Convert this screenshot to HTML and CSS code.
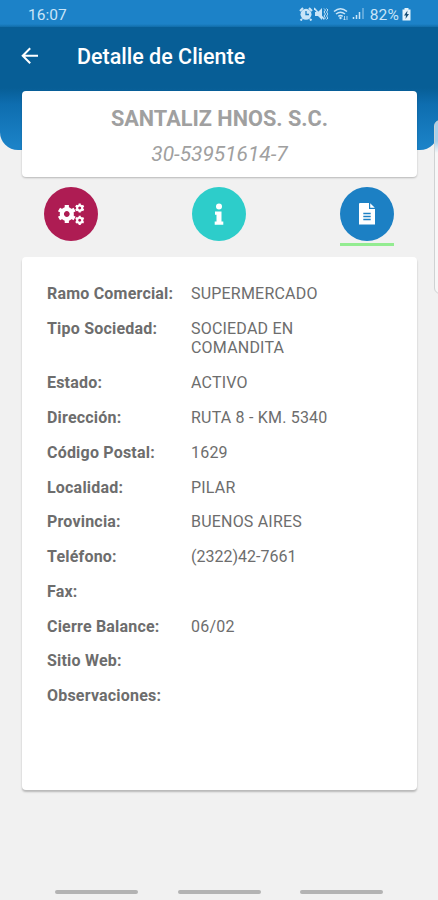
FILE: index.html
```html
<!DOCTYPE html>
<html lang="es">
<head>
<meta charset="utf-8">
<title>Detalle de Cliente</title>
<link rel="stylesheet" href="styles.css">
</head>
<body>
<div class="screen">
  <header class="hero">
    <div class="status">
      <span class="clock">16:07</span>
      <div class="indicators">
        <svg class="alarm" width="14" height="14" viewBox="0 0 14 14"><path d="M1 4 4 1M10 1l3 3M3 12l-1.5 1.5M11 12l1.5 1.5" stroke="currentColor" stroke-width="2"/><circle cx="7" cy="7.3" r="5.5" fill="currentColor"/><path d="M7 4v3.5h3" fill="none" stroke="#1c80c4" stroke-width="1.3"/></svg>
        <svg class="mute" width="14" height="14" viewBox="0 0 14 14"><path d="M1 5h3l4-4v12L4 9H1z" fill="currentColor"/><path d="M0 1l10 11" stroke="currentColor" stroke-width="1.6"/><path d="M10 1.5 11.5 3 10 5l1.5 2L10 9l1.5 2-1.5 1.500M12.500 1.500 14 3l-1.500 2L14 7l-1.500 2L14 11l-1.500 1.500" fill="none" stroke="currentColor"/></svg>
        <svg class="wifi" width="16" height="14" viewBox="0 0 16 14"><path d="M1 4.500Q7.500-1 14 4.500M3 7q4.500-3.500 9 0M5.300 9.300q2.200-1.700 4.400 0" fill="none" stroke="currentColor" stroke-width="1.500"/><circle cx="7.500" cy="11" r="1.200" fill="currentColor"/><path d="M11.500 9v4m-1.200-1.200L11.500 13l1-1M14 13V9" fill="none" stroke="currentColor" stroke-width=".8"/></svg>
        <svg class="signal" width="13" height="13" viewBox="0 0 13 13"><path d="M1.500 12V10M4.500 12V8M7.500 12V5" stroke="currentColor" stroke-width="1.500"/><path d="M11 12V1" stroke="currentColor" stroke-width="1.500" opacity=".5"/></svg>
        <span class="percent">82%</span>
        <svg class="battery" width="9" height="13" viewBox="0 0 9 13"><path d="M2.500 0h4v1.500H8.500v11h-8v-11h2z" fill="currentColor"/><path d="M5.500 2.500 2 7.500h2L3.500 11 7 6H5z" fill="#174f77"/></svg>
      </div>
    </div>
    <div class="appbar">
      <svg class="back" width="18" height="18" viewBox="0 0 18 18"><path d="M9.200 1.300 1.700 8.800l7.500 7.500M1.700 8.800H17" fill="none" stroke="currentColor" stroke-width="2"/></svg>
      <h1>Detalle de Cliente</h1>
    </div>
  </header>
  <div class="edge-handle"></div>
  <section class="card client">
    <h2>SANTALIZ HNOS. S.C.</h2>
    <p>30-53951614-7</p>
  </section>
  <nav class="tabs">
    <div class="tab"><span class="disc settings"><svg width="54" height="54" viewBox="0 0 54 54">
      <defs>
        <g id="gear"><circle r="5" fill="none" stroke="#fff" stroke-width="4.200"/><path d="M0-9V-5M0 9V5M-7.800-4.500-4.300-2.500M7.800-4.500 4.300-2.500M-7.800 4.500-4.300 2.500M7.800 4.500 4.300 2.500" stroke="#fff" stroke-width="4.200"/></g>
      </defs>
      <use href="#gear" x="22.800" y="27"/><use href="#gear" transform="translate(35.700 21) scale(.51)"/><use href="#gear" transform="translate(35.700 33.300) scale(.51)"/></svg></span></div>
    <div class="tab"><span class="disc info"><svg width="54" height="54" viewBox="0 0 54 54"><circle cx="27" cy="19.500" r="3" fill="#fff"/><path d="M23 24.500h6.500v10h1.800v3.200H22.700v-3.200h1.800v-6.700H23z" fill="#fff"/></svg></span></div>
    <div class="tab active"><span class="disc document"><svg width="54" height="54" viewBox="0 0 54 54"><path d="M20 16h9v6h6v15.500H19V17q0-1 1-1zM30.200 16.200l4.600 4.600h-4.600z" fill="#fff"/><path d="M23.300 26.500h7.400M23.300 29.500h7.400M23.300 32.500h7.400" stroke="#1c80c4" stroke-width="1.300"/></svg></span></div>
  </nav>
  <section class="card details">
    <dl>
      <dt>Ramo Comercial:</dt><dd>SUPERMERCADO</dd>
      <dt>Tipo Sociedad:</dt><dd>SOCIEDAD EN<br>COMANDITA</dd>
      <dt>Estado:</dt><dd>ACTIVO</dd>
      <dt>Dirección:</dt><dd>RUTA 8 - KM. 5340</dd>
      <dt>Código Postal:</dt><dd>1629</dd>
      <dt>Localidad:</dt><dd>PILAR</dd>
      <dt>Provincia:</dt><dd>BUENOS AIRES</dd>
      <dt>Teléfono:</dt><dd class="phone">(2322)42-7661</dd>
      <dt>Fax:</dt><dd></dd>
      <dt>Cierre Balance:</dt><dd>06/02</dd>
      <dt>Sitio Web:</dt><dd></dd>
      <dt>Observaciones:</dt><dd></dd>
    </dl>
  </section>
  <footer class="gestures"><span></span><span></span><span></span></footer>
</div>
</body>
</html>
```
FILE: styles.css
```css
* { box-sizing: border-box; }
body { margin: 0; font-family: Roboto, sans-serif; background: #f1f1f1; }
h1, h2, p, dl, dd { margin: 0; }
svg { display: block; }
.screen { position: relative; height: 900px; overflow: hidden; display: flex; flex-direction: column; }
.hero {
  flex: none;
  height: 150px;
  border-radius: 0 0 18px 18px;
  background: linear-gradient(#075e96 88px, #0e6daf 104px, #1b82c7 146px);
}
.status {
  height: 27px;
  padding: 2px 27px 0 28px;
  background: linear-gradient(#1c82c8 24px, #116da9);
  display: flex;
  align-items: center;
  justify-content: space-between;
  color: #c9e5f8;
  font-size: 15.500px;
}
.indicators { display: flex; align-items: center; }
.indicators svg { margin-top: -2px; }
.mute { margin-left: 1px; }
.wifi { margin-left: 5px; }
.signal { margin-left: 3px; }
.percent { margin: 0 3px 0 5px; letter-spacing: .2px; }
.indicators .battery { margin-top: 0; color: #e4f3fc; }
.appbar { height: 61px; padding: 0 0 3px 21px; display: flex; align-items: center; color: #fff; }
.appbar h1 { margin-left: 38px; padding-top: 1px; font-size: 21.500px; font-weight: 500; line-height: 26px; }
.edge-handle {
  position: absolute;
  left: 434px;
  top: 120px;
  width: 12px;
  height: 174px;
  border: 1px solid #cfd2d3;
  border-radius: 6px;
  background: linear-gradient(#a9d0ea 20px, #f7f7f7 32px);
}
.card { margin: 0 21px 0 22px; background: #fff; border-radius: 4px; box-shadow: 0 1px 2px rgba(0,0,0,.24); position: relative; flex: none; }
.client { margin-top: -59px; height: 86px; padding-top: 13px; text-align: center; color: #a0a0a0; }
.client h2 { font-size: 21.700px; line-height: 29px; font-weight: 700; }
.client p { margin-top: 7px; font-size: 20.900px; line-height: 28px; font-style: italic; }
.tabs { flex: none; height: 80px; padding: 10px 44px 0; display: flex; justify-content: space-between; }
.tab { height: 59px; border-bottom: 3px solid transparent; }
.tab.active { border-color: #93ec91; }
.disc { display: block; width: 54px; height: 54px; border-radius: 50%; }
.settings { background: #ae1c53; }
.info { background: #2dcdca; }
.document { background: #1c80c4; }
.details { height: 533px; padding: 27px 24px 27px 25px; box-shadow: 0 2px 2px rgba(0,0,0,.24); }
dl { display: grid; grid-template-columns: 144px 1fr; row-gap: 15.200px; color: #6d6d6d; font-size: 16px; line-height: 19.600px; letter-spacing: .2px; }
dl dt, dl dd { min-height: 19.600px; }
dt { font-weight: 700; }
.phone { letter-spacing: 0; }
.gestures { margin-top: 100px; padding: 0 55px; display: flex; justify-content: space-between; }
.gestures span { width: 83px; height: 4px; border-radius: 2px; background: #b3b3b3; }
```
